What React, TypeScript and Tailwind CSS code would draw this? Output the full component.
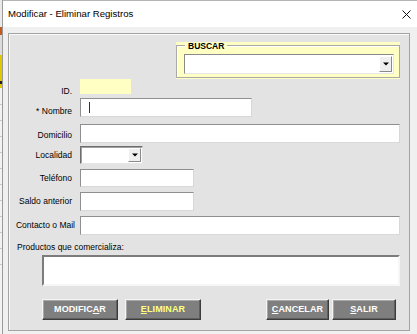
import React from 'react'

const FONT = "font-['Liberation_Sans',Arial,sans-serif]"

const inputCls =
  'bg-white border border-t-[#8f8f8f] border-l-[#8f8f8f] border-r-[#d8d8d8] border-b-[#d8d8d8]'

const DropArrow = () => (
  <div className="flex h-full w-[13px] items-center justify-center border border-t-white border-l-white border-r-[#8a8a8a] border-b-[#8a8a8a] bg-[#efefef]">
    <svg width="6" height="4" viewBox="0 0 6 4">
      <path d="M0 0.5H6L3 3.5Z" fill="#000" />
    </svg>
  </div>
)

const Btn = ({ pre, u, post, yellow }: { pre: string; u: string; post: string; yellow?: boolean }) => (
  <button
    className={
      'flex h-[21px] w-full items-center justify-center border border-t-[#f4f4f4] border-l-[#f4f4f4] border-r-[#3c3c3c] border-b-[#3c3c3c] bg-[#7f7f7f] text-[9px] font-bold tracking-[0.1px] shadow-[inset_-1px_-1px_0_#5e5e5e,inset_1px_1px_0_#a8a8a8] ' +
      (yellow ? 'text-[#ffff80]' : 'text-white')
    }
  >
    {pre}
    <span className="underline underline-offset-[1px]">{u}</span>
    {post}
  </button>
)

export default function App() {
  return (
    <div className={`${FONT} flex h-[334px] w-[417px] overflow-hidden bg-white text-black`}>
      {/* what is behind the window */}
      <div className="flex w-[2px] flex-col bg-[#f2f2f2]">
        <div className="h-[27px] bg-[#e9e9e9]" />
        <div className="h-[8px] bg-[#c65a1e]" />
        <div className="h-[20px] bg-[#dcdcdc]" />
        <div className="h-[26px] bg-[#e2c800]" />
        <div className="h-[3px] bg-[#222]" />
        <div className="h-[4px] bg-[#e2c800]" />
        <div className="mt-[16px] h-px bg-[#c8c8c8]" />
        <div className="mt-[15px] h-px bg-[#c8c8c8]" />
        <div className="mt-[15px] h-px bg-[#c8c8c8]" />
        <div className="mt-[15px] h-px bg-[#c8c8c8]" />
        <div className="mt-[15px] h-px bg-[#c8c8c8]" />
        <div className="mt-[15px] h-px bg-[#c8c8c8]" />
        <div className="mt-[15px] h-px bg-[#c8c8c8]" />
        <div className="mt-[15px] h-px bg-[#c8c8c8]" />
        <div className="mt-[15px] h-px bg-[#c8c8c8]" />
        <div className="mt-[15px] h-px bg-[#c8c8c8]" />
        <div className="mt-[15px] h-px bg-[#c8c8c8]" />
      </div>

      {/* window */}
      <div className="flex flex-1 flex-col border-l border-[#9a9a9a]">
        <div className="flex h-[27px] items-center justify-between border-t border-[#b5b5b5] bg-white pl-[5px] pr-[6px]">
          <span className="text-[9.6px]">Modificar - Eliminar Registros</span>
          <svg width="9" height="9" viewBox="0 0 9 9">
            <path d="M0.5 0.5L8.5 8.5M8.5 0.5L0.5 8.5" stroke="#111" strokeWidth="1" />
          </svg>
        </div>

        <div className="flex-1 bg-[#f0f0f0] pt-[6px] pl-[5px]">
          <div className="flex h-[298px] w-[402px] flex-col border border-[#a3a3a3] bg-[#e3e3e3] text-[8.5px] shadow-[inset_1px_1px_0_#fafafa]">
            {/* BUSCAR */}
            <div className="relative ml-[167px] mt-[8px] h-[37px] w-[224px] bg-[#ffffc4] pt-[3px] pb-[1px]">
              <div className="h-full border border-[#a9a9a9] shadow-[inset_1px_1px_0_#fff]">
                <div className="ml-[7px] mt-[8px] flex h-[20px] w-[210px] border border-t-[#8a8a8a] border-l-[#8a8a8a] border-r-[#e6e6e6] border-b-[#e6e6e6] bg-white">
                  <div className="flex-1" />
                  <div className="py-px pr-px">
                    <DropArrow />
                  </div>
                </div>
              </div>
              <span className="absolute left-[9px] top-0 bg-[#ffffc4] px-[3px] text-[8.5px] font-bold leading-[9px]">
                BUSCAR
              </span>
            </div>

            {/* ID */}
            <div className="flex h-[15px] items-center">
              <span className="mt-[10px] w-[63px] text-right">ID.</span>
              <div className="ml-[8px] h-full w-[51px] bg-[#ffffc4]" />
            </div>

            {/* Nombre */}
            <div className="mt-[4px] flex h-[19px] items-center">
              <span className="mt-[8px] w-[63px] text-right">* Nombre</span>
              <div className={`ml-[8px] flex h-full w-[172px] items-center ${inputCls}`}>
                <div className="ml-[8px] h-[11px] w-px bg-[#333]" />
              </div>
            </div>

            {/* Domicilio */}
            <div className="mt-[7px] flex h-[19px] items-center">
              <span className="mt-[4px] w-[63px] text-right">Domicilio</span>
              <div className={`ml-[8px] h-full w-[320px] ${inputCls}`} />
            </div>

            {/* Localidad */}
            <div className="mt-[3px] flex h-[18px] items-center">
              <span className="w-[63px] text-right">Localidad</span>
              <div className="ml-[8px] flex h-full w-[63px] border border-t-[#6e6e6e] border-l-[#6e6e6e] border-r-[#e6e6e6] border-b-[#e6e6e6] bg-white shadow-[inset_1px_1px_0_#a0a0a0]">
                <div className="flex-1" />
                <div className="py-px pr-px">
                  <DropArrow />
                </div>
              </div>
            </div>

            {/* Teléfono */}
            <div className="mt-[5px] flex h-[18px] items-center">
              <span className="w-[63px] text-right">Teléfono</span>
              <div className={`ml-[8px] h-full w-[114px] ${inputCls}`} />
            </div>

            {/* Saldo anterior */}
            <div className="mt-[5px] flex h-[19px] items-center">
              <span className="w-[63px] text-right">Saldo anterior</span>
              <div className={`ml-[8px] h-full w-[114px] ${inputCls}`} />
            </div>

            {/* Contacto o Mail */}
            <div className="mt-[5px] flex h-[19px] items-center">
              <span className="w-[66px] whitespace-nowrap text-right">Contacto o Mail</span>
              <div className={`ml-[5px] h-full w-[320px] ${inputCls}`} />
            </div>

            <div className="mt-[7px] h-[11px] pl-[8px] leading-[11px]">Productos que comercializa:</div>

            <div className="ml-[33px] mt-[2px] h-[31px] w-[358px] border-2 border-t-[#7c7c7c] border-l-[#7c7c7c] border-r-[#f6f6f6] border-b-[#f6f6f6] bg-white" />

            {/* buttons */}
            <div className="mt-[13px] flex">
              <div className="ml-[33px] w-[76px]">
                <Btn pre="MODIFIC" u="A" post="R" />
              </div>
              <div className="ml-[7px] w-[76px]">
                <Btn pre="" u="E" post="LIMINAR" yellow />
              </div>
              <div className="ml-[65px] w-[63px]">
                <Btn pre="" u="C" post="ANCELAR" />
              </div>
              <div className="ml-[3px] w-[64px]">
                <Btn pre="" u="S" post="ALIR" />
              </div>
            </div>
          </div>
        </div>
      </div>
    </div>
  )
}
